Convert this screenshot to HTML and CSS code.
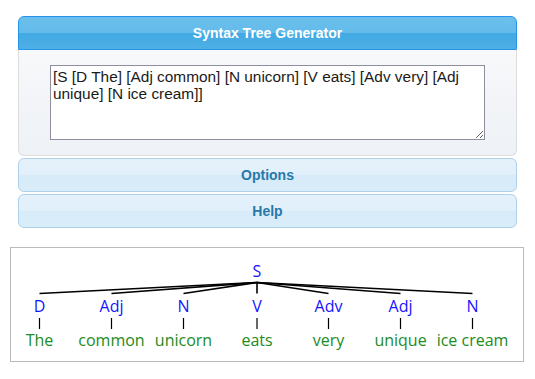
FILE: index.html
```html
<!DOCTYPE html>
<html lang="en">

<head>
    <meta charset="UTF-8">
    <meta name="viewport" content="width=device-width, initial-scale=1.0">
    <title>Syntax Tree Generator</title>
    <link rel="stylesheet" href="styles.css">
</head>

<body>
    <div class="accordion">
        <div class="acc-header active">Syntax Tree Generator</div>
        <div class="acc-content">
            <textarea id="phrase" spellcheck="false">[S [D The] [Adj common] [N unicorn] [V eats] [Adv very] [Adj unique] [N ice cream]]</textarea>
        </div>
        <div class="acc-header">Options</div>
        <div class="acc-header">Help</div>
    </div>

    <div class="tree-box">
        <svg class="tree" width="512" height="113" viewBox="11 248 512 113">
            <g class="edges">
                <line x1="257" y1="282.5" x2="39.5" y2="293.5" />
                <line x1="257" y1="282.5" x2="111.5" y2="293.5" />
                <line x1="257" y1="282.5" x2="183.5" y2="293.5" />
                <line x1="257" y1="282.5" x2="257" y2="293.5" />
                <line x1="257" y1="282.5" x2="328.5" y2="293.5" />
                <line x1="257" y1="282.5" x2="400.5" y2="293.5" />
                <line x1="257" y1="282.5" x2="472.5" y2="293.5" />
            </g>
            <g class="stems">
                <line x1="39.5" y1="318" x2="39.5" y2="329" />
                <line x1="111.5" y1="318" x2="111.5" y2="329" />
                <line x1="183.5" y1="318" x2="183.5" y2="329" />
                <line x1="257" y1="318" x2="257" y2="329" />
                <line x1="328.5" y1="318" x2="328.5" y2="329" />
                <line x1="400.5" y1="318" x2="400.5" y2="329" />
                <line x1="472.5" y1="318" x2="472.5" y2="329" />
            </g>
            <text class="node" x="257" y="277">S</text>
            <text class="node" x="39.5" y="312">D</text>
            <text class="node" x="111.5" y="312">Adj</text>
            <text class="node" x="183.5" y="312">N</text>
            <text class="node" x="257" y="312">V</text>
            <text class="node" x="328.5" y="312">Adv</text>
            <text class="node" x="400.5" y="312">Adj</text>
            <text class="node" x="472.5" y="312">N</text>
            <text class="leaf" x="39.5" y="346">The</text>
            <text class="leaf" x="111.5" y="346">common</text>
            <text class="leaf" x="183.5" y="346">unicorn</text>
            <text class="leaf" x="257" y="346">eats</text>
            <text class="leaf" x="328.5" y="346">very</text>
            <text class="leaf" x="400.5" y="346">unique</text>
            <text class="leaf" x="472.5" y="346">ice cream</text>
        </svg>
    </div>
</body>

</html>
```

FILE: styles.css
```css
body {
    margin: 0;
    background-color: #fff;
    font-family: "Liberation Sans", Arial, sans-serif;
}

.accordion {
    width: 499px;
    margin: 16px 0 0 18px;
}

.acc-header {
    box-sizing: border-box;
    height: 34px;
    margin-top: 2px;
    line-height: 32px;
    text-align: center;
    font-size: 14px;
    font-weight: bold;
    color: #2779aa;
    border: 1px solid #aed0ea;
    border-radius: 6px;
    background: linear-gradient(#e4f1fb 0%, #e2f0fb 50%, #d7ebf9 51%, #d9ecf9 100%);
}

.acc-header.active {
    margin-top: 0;
    height: 34px;
    color: #fff;
    border-color: #2694e8;
    border-radius: 6px 6px 0 0;
    background: linear-gradient(#6bbfeb 0%, #64bbea 50%, #42a9e2 51%, #4fb0e6 100%);
}

.acc-content {
    box-sizing: border-box;
    height: 106px;
    padding: 15px 0 0 32px;
    border: 1px solid #dddddd;
    border-top: none;
    border-radius: 0 0 6px 6px;
    background: linear-gradient(#f8f9fb 0%, #f3f5f8 40%, #eef2f6 100%);
}

#phrase {
    box-sizing: border-box;
    width: 435px;
    height: 75px;
    margin: 0 0 0 -1px;
    padding: 2px 2px;
    font-family: "Liberation Sans", Arial, sans-serif;
    font-size: 15.4px;
    line-height: 17px;
    color: #1a1a1a;
    background: #fff;
    border: 1px solid #8e8e9c;
    border-radius: 0;
    resize: vertical;
}

.tree-box {
    width: 512px;
    height: 113px;
    margin: 19px 0 0 10px;
    border: 1px solid #bbbbbb;
}

.tree {
    display: block;
}

.tree line {
    stroke: #000;
}

.edges line {
    stroke-width: 1.6;
}

.stems line {
    stroke-width: 1.2;
}

.tree text {
    font-family: "Open Sans", "Noto Sans", sans-serif;
    font-size: 16px;
    text-anchor: middle;
}

.node {
    fill: #1414ff;
}

.leaf {
    fill: #228b22;
}
```
